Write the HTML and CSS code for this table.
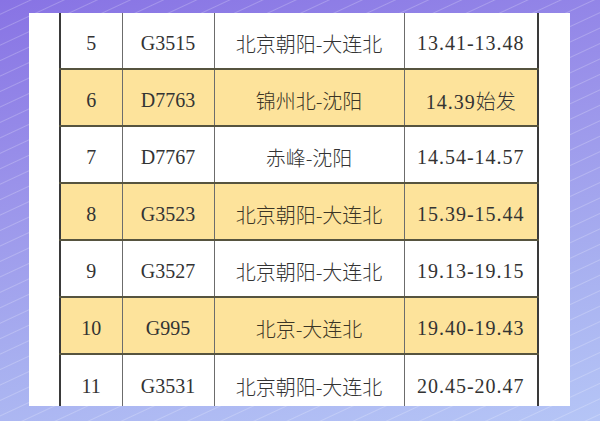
FILE: index.html
```html
<!DOCTYPE html>
<html lang="zh">
<head>
<meta charset="utf-8">
<link rel="stylesheet" href="styles.css">
</head>
<body>
<div class="card">
  <table class="timetable">
    <colgroup>
      <col class="c1"><col class="c2"><col class="c3"><col class="c4">
    </colgroup>
    <tbody>
      <tr><td class="num">5</td><td class="num">G3515</td><td class="zh">北京朝阳-大连北</td><td class="num time">13.41-13.48</td></tr>
      <tr class="hl"><td class="num">6</td><td class="num">D7763</td><td class="zh">锦州北-沈阳</td><td class="num time">14.39<span class="zhs">始发</span></td></tr>
      <tr><td class="num">7</td><td class="num">D7767</td><td class="zh">赤峰-沈阳</td><td class="num time">14.54-14.57</td></tr>
      <tr class="hl"><td class="num">8</td><td class="num">G3523</td><td class="zh">北京朝阳-大连北</td><td class="num time">15.39-15.44</td></tr>
      <tr><td class="num">9</td><td class="num">G3527</td><td class="zh">北京朝阳-大连北</td><td class="num time">19.13-19.15</td></tr>
      <tr class="hl"><td class="num">10</td><td class="num">G995</td><td class="zh">北京-大连北</td><td class="num time">19.40-19.43</td></tr>
      <tr><td class="num">11</td><td class="num">G3531</td><td class="zh">北京朝阳-大连北</td><td class="num time">20.45-20.47</td></tr>
    </tbody>
  </table>
</div>
</body>
</html>
```
FILE: styles.css
```css
html, body {
  margin: 0;
  padding: 0;
}
body {
  width: 600px;
  height: 421px;
  overflow: hidden;
  background:
    repeating-linear-gradient(155deg, rgba(255,255,255,0) 0px, rgba(255,255,255,0) 12px, rgba(255,255,255,0.22) 13px, rgba(255,255,255,0) 14px),
    linear-gradient(170deg, #8873e4 0%, #9a92ea 35%, #a8b0f0 70%, #b5c5f6 100%);
  display: flex;
  align-items: flex-start;
}
.card {
  margin: 13px 30px 0 29px;
  width: 541px;
  height: 393px;
  background: #ffffff;
  overflow: hidden;
}
.timetable {
  margin: -1px 0 0 30px;
  width: 478px;
  border-collapse: collapse;
  table-layout: fixed;
  border-left: 2px solid #3a3a3a;
  border-right: 2px solid #3a3a3a;
}
.c1 { width: 62px; }
.c2 { width: 92px; }
.c3 { width: 190px; }
.c4 { width: 134px; }
.timetable td {
  height: 57px;
  padding: 6px 0 0 0;
  text-align: center;
  vertical-align: middle;
  border-top: 2px solid #56543f;
  border-left: 1px solid #6c6c6c;
  border-right: 1px solid #6c6c6c;
  color: #333333;
  box-sizing: border-box;
}
.timetable tr:first-child td {
  border-top: none;
}
.timetable tr.hl td {
  background: #fde39b;
}
.num {
  font-family: "Liberation Serif", serif;
  font-size: 20px;
  color: #353535;
}
.time {
  letter-spacing: 1px;
}
.zh {
  font-family: "Noto Sans CJK SC", sans-serif;
  font-size: 20px;
  font-weight: 300;
  color: #444444;
}
.hl .zh { color: #3a3526; }
.zhs {
  font-family: "Noto Sans CJK SC", sans-serif;
  font-weight: 300;
  letter-spacing: 0;
}
```
